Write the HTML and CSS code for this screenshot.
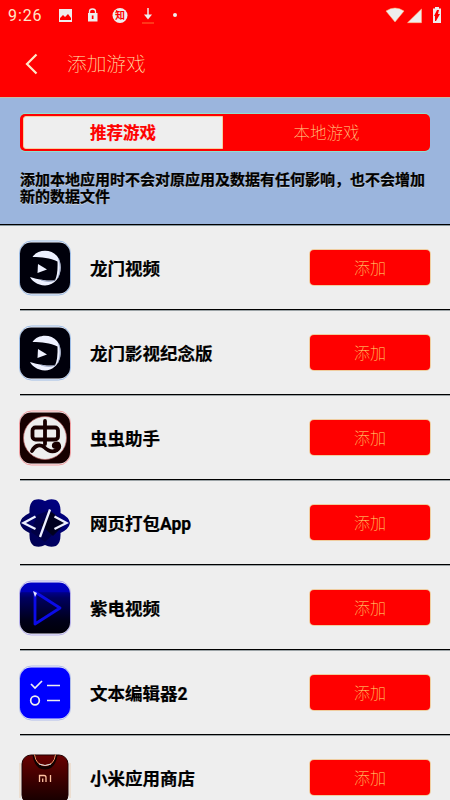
FILE: index.html
```html
<!DOCTYPE html>
<html lang="zh-CN">
<head>
<meta charset="utf-8">
<title>添加游戏</title>
<link rel="stylesheet" href="styles.css">
</head>
<body>
<svg class="defs" width="0" height="0">
  <defs>
    <linearGradient id="violet" x1="0" y1="0" x2="0" y2="1"><stop offset="0" stop-color="#0000c8"/><stop offset=".18" stop-color="#0000b8"/><stop offset=".2" stop-color="#000088"/><stop offset=".3" stop-color="#000060"/><stop offset=".75" stop-color="#000018"/><stop offset="1" stop-color="#000008"/></linearGradient>
    <linearGradient id="bag" x1="0" y1="0" x2="0" y2="1"><stop offset="0" stop-color="#680000"/><stop offset="1" stop-color="#120000"/></linearGradient>
    <linearGradient id="petal" x1="1" y1="0" x2="0" y2="1"><stop offset="0" stop-color="#00008c"/><stop offset="1" stop-color="#000048"/></linearGradient>
    <symbol id="dragon" viewBox="0 0 52 56">
      <rect x=".5" y="1" width="51" height="54" rx="12" fill="#f0f2fa" stroke="#9dbce5"/>
      <rect x="1" y="2.500" width="50" height="51" rx="11" fill="#00000b"/>
      <path d="M13.500 17C19 9 32 9 38 16C46 26 41 45 26 45.500C18 45 13 41 11 37C21 40 29 41 36 40.500Q39 34 38.500 21.500C31 18 23 17 13.500 17Z" fill="#eef1ff"/>
      <path d="M39.500 18Q43 28 39 38M22 40Q31 43 36 40" fill="none" stroke="#8090b8" stroke-width=".7"/>
      <path d="M19 24L28 29.500L18.500 33Z" fill="#eef1ff"/>
    </symbol>
  </defs>
</svg>
<header class="top">
  <div class="status">
    <span class="clock">9:26</span>
    <svg class="tray" width="130" height="24" viewBox="0 0 130 24">
      <path d="M5 8H18V21H5Z" fill="#eee"/><path d="M6 19V17L9 14L11 16L14 13L17 17V19Z" fill="red"/>
      <path d="M35.500 12.500V10.500Q35.500 8 38.500 8Q41.500 8 41.500 10.500V12.500" fill="none" stroke="#eee" stroke-width="1.300"/><path d="M34 12H43.500V20.500H34Z" fill="#eee"/><path d="M37.800 14.500H39.500V18H37.800Z" fill="red"/>
      <circle cx="66" cy="14.500" r="7.500" fill="#eee"/><text x="66" y="18.300" class="badge">知</text>
      <path d="M94 7V15" stroke="#eee" stroke-width="1.500"/><path d="M90 13.500H98L94 18.500Z" fill="#eee"/><path d="M88 22H100" stroke="#ff4a22" stroke-width="1.500"/>
      <circle cx="121" cy="14" r="2" fill="#eee"/>
    </svg>
    <svg class="signals" width="58" height="24" viewBox="0 0 58 24">
      <path d="M1 9Q10 3 19 9L10 20Z" fill="#eee" stroke="#ffc080" stroke-width=".5"/>
      <path d="M22.500 20.700L36.500 7V20.700Z" fill="#eee" stroke="#ffc080" stroke-width=".5"/>
      <path d="M48 6.500H50V5H54V6.500H56V21H48Z" fill="#eee"/><path d="M52 8H54L53 12H55L51 19H50V14H49Z" fill="red"/>
    </svg>
  </div>
  <div class="nav">
    <svg width="14" height="22" viewBox="0 0 14 22"><path d="M11.500 1.500L2 11L11.500 20.500" fill="none" stroke="#ffe8c8" stroke-width="2.200"/></svg>
    <h1>添加游戏</h1>
  </div>
</header>
<section class="panel">
  <div class="tabs"><div class="tab active">推荐游戏</div><div class="tab">本地游戏</div></div>
  <p>添加本地应用时不会对原应用及数据有任何影响，也不会增加新的数据文件</p>
</section>
<main>
  <div class="row"><svg class="icon"><use href="#dragon"/></svg><span class="name">龙门视频</span><button>添加</button></div>
  <div class="row"><svg class="icon"><use href="#dragon"/></svg><span class="name">龙门影视纪念版</span><button>添加</button></div>
  <div class="row"><svg class="icon" viewBox="0 0 52 56">
    <rect x=".5" y="1" width="51" height="54" rx="12" fill="#f8eeee" stroke="#ee9da0"/><rect x="1" y="2.500" width="50" height="51" rx="11" fill="#160000"/>
    <circle cx="26" cy="28" r="21.500" fill="#eee" stroke="#b86060" stroke-width=".7"/>
    <g fill="none" stroke="#180000" stroke-width="3.800" stroke-linecap="round" stroke-linejoin="round"><rect x="13.500" y="17.500" width="25.500" height="12" rx="3"/><path d="M26 11V34M13 41C16 35 21 34 25 37C29 41 33 43 38 40C42 37 40 33 37 33.500C34 34 34 37 37 37"/></g>
  </svg><span class="name">虫虫助手</span><button>添加</button></div>
  <div class="row"><svg class="icon" viewBox="0 0 52 56">
    <path fill="url(#petal)" d="M26 6Q31 3 37 5Q42 8 41.500 18Q50 22 51 28Q50 34 41.500 38Q42 48 37 51Q31 53 26 50Q21 53 15 51Q10 48 10.500 38Q2 34 1 28Q2 22 10.500 18Q10 8 15 5Q21 3 26 6Z"/>
    <path d="M31 15L46 28L26 47L12 37L18 20Z" fill="#000020" opacity=".4"/><path d="M32 17L47 28L34 41L22 30Z" fill="#00000c" opacity=".7"/>
    <path d="M16.500 21.500L4.500 28L16.500 34M35.500 21.500L47.500 28L35.500 34M31 14.500L21 42" fill="none" stroke="#edf0ff" stroke-width="2.300"/>
  </svg><span class="name">网页打包App</span><button>添加</button></div>
  <div class="row"><svg class="icon" viewBox="0 0 52 56">
    <rect x=".5" y="1" width="51" height="54" rx="12" fill="#f0effa" stroke="#b5afea"/><rect x="1" y="2.500" width="50" height="51" rx="11" fill="url(#violet)"/>
    <path d="M16 12L41 28L16 44Z" fill="none" stroke="#0b0be8" stroke-width="2.800" stroke-linejoin="round"/><path d="M14 11L18 13L16 17Z" fill="#e5e5ff"/>
  </svg><span class="name">紫电视频</span><button>添加</button></div>
  <div class="row"><svg class="icon" viewBox="0 0 52 56">
    <rect x=".5" y="1" width="51" height="54" rx="12" fill="#f0effa" stroke="#afbceb"/><rect x="1" y="2.500" width="50" height="51" rx="11" fill="#00f"/>
    <g fill="none" stroke="#eee" stroke-width="1.700"><path d="M12 19L16 23L23 16M28 20.500H41M28 35.500H41"/><circle cx="16" cy="35.500" r="4.300"/></g>
  </svg><span class="name">文本编辑器2</span><button>添加</button></div>
  <div class="row"><svg class="icon" viewBox="0 0 52 56">
    <path d="M1 13V48M51 13V48" stroke="#e8c6a5" stroke-width=".8"/><rect x="3" y="5" width="46" height="49" rx="9" fill="url(#bag)" stroke="#200000"/>
    <path d="M15 5Q17 18 26 18Q35 18 37 5" fill="none" stroke="#100000" stroke-width="3"/>
    <path d="M15.500 4.500Q17 15.500 26 15.500Q35 15.500 36.500 4.500" fill="none" stroke="#ff9264" stroke-width="1"/><path d="M20 14Q26 17 32 14" fill="none" stroke="#ccd6dc" stroke-width="1"/>
    <path d="M20.500 32V25.500H25Q27 25.500 27 27.500V32M23.700 32V28.500M31.500 25V32" fill="none" stroke="#ffc0a0" stroke-width="1.300"/>
  </svg><span class="name">小米应用商店</span><button>添加</button></div>
</main>
</body>
</html>
```
FILE: styles.css
```css
* { box-sizing: border-box; }
body { margin: 0; width: 450px; height: 800px; overflow: hidden; background: #eee; font-family: Roboto, "Noto Sans CJK SC", sans-serif; }
.defs { position: absolute; }
.top { height: 98px; background: linear-gradient(red 97px, #d2d9cb 97px, #b8a080 98px); color: #ffe6c8; }
.status { height: 30px; display: flex; padding-left: 8px; }
.clock { width: 46px; font-size: 16px; line-height: 31px; letter-spacing: .9px; }
.tray { margin-top: 1px; }
.signals { margin: 2px 7px 0 auto; }
.badge { font: bold 10px "Noto Sans CJK SC", sans-serif; fill: #f00; text-anchor: middle; }
.nav { height: 67px; display: flex; align-items: center; padding-left: 25px; }
h1 { margin: 2px 0 0 28px; font-size: 19.7px; font-weight: 100; line-height: 30px; color: #fff0b8; }
.panel { height: 128px; padding: 16px 20px 0; background: linear-gradient(#9bb5dd 126px, #000 126px 127px, #89989d 127px); }
.tabs { height: 37px; display: flex; padding: 2px 0 2px 3px; border-radius: 5px; background: red; box-shadow: 0 -1px #91dfce, 0 1px #91dfce; }
.tab { flex: 1; display: flex; align-items: center; justify-content: center; font-size: 16.5px; font-weight: 100; line-height: 24px; padding-top: 2px; color: #ffe09a; }
.tab.active { flex: 0 0 200px; background: #eee; border: 1px solid #f6cea0; border-radius: 3px 0 0 3px; color: red; font-weight: 700; -webkit-text-stroke: .2px red; }
.panel p { margin: 21px 0 0; width: 412px; font-size: 15px; line-height: 17px; font-weight: 700; color: #000; -webkit-text-stroke: .25px #000; text-shadow: 0 1px #d1d5da; }
.row { height: 85px; margin-left: 20px; padding: 0 20px 2px 0; display: flex; align-items: center; background: linear-gradient(transparent 83px, #000 83px 84px, #9ba3a6 84px); }
.icon { width: 52px; height: 56px; margin-left: -1px; flex: none; }
.name { margin: 2px 0 0 19px; font-size: 17.5px; line-height: 26px; font-weight: 700; color: #000; -webkit-text-stroke: .2px #000; }
button { width: 120px; height: 35px; margin-left: auto; padding: 0 0 2px; border: 0; border-radius: 4px; background: red; box-shadow: 0 0 0 1px #efcda0; color: #ffe078; font: 100 16px Roboto, "Noto Sans CJK SC", sans-serif; }
```
